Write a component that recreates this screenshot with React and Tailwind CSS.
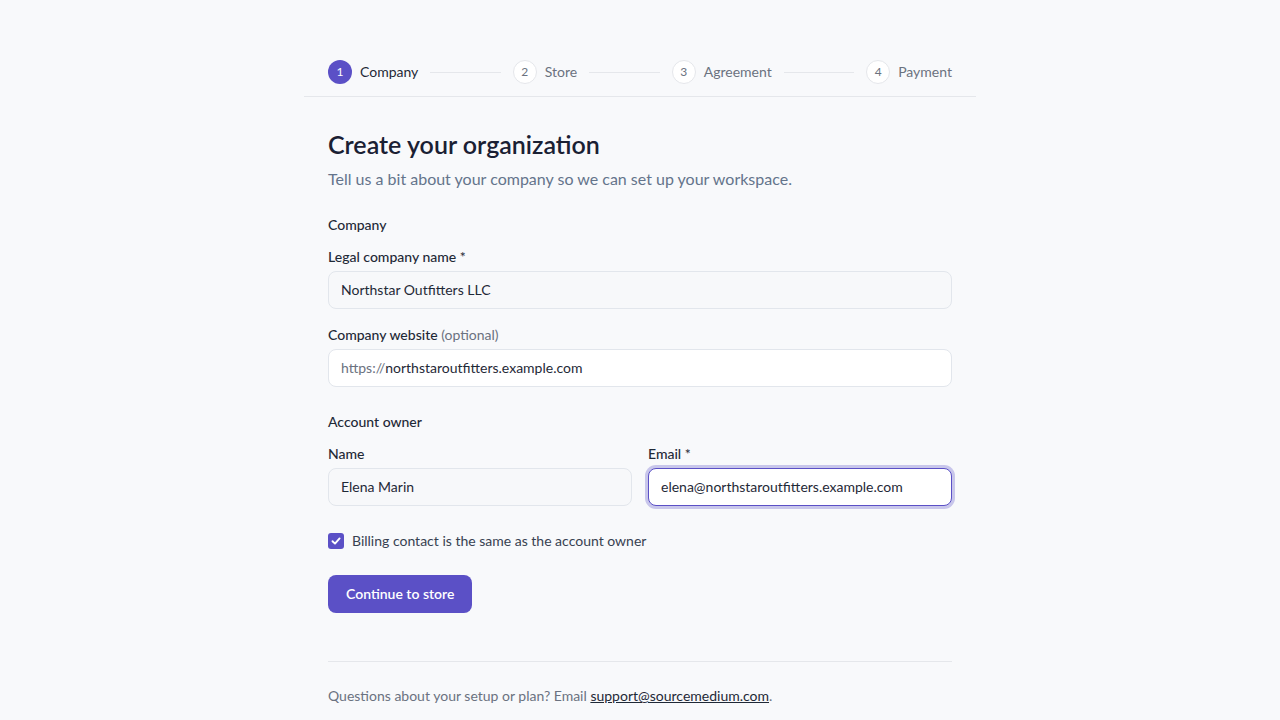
import React from "react";

const font = { fontFamily: "Lato, 'Noto Sans', sans-serif" };

function Step({ n, label, active }) {
  return (
    <div className="flex items-center gap-2 shrink-0">
      <div
        className={
          active
            ? "w-6 h-6 rounded-full bg-[#5b50c6] text-white text-xs flex items-center justify-center"
            : "w-6 h-6 rounded-full bg-white border border-[#e5e7eb] text-[#6b7280] text-xs flex items-center justify-center"
        }
      >
        {n}
      </div>
      <span className={active ? "text-sm text-[#1f2937]" : "text-sm text-[#6b7280]"}>{label}</span>
    </div>
  );
}

function Line() {
  return <div className="flex-1 h-px bg-[#e5e7eb] mx-3" />;
}

export default function App() {
  return (
    <div className="min-h-screen bg-[#f8f9fb]" style={font}>
      <div className="w-[672px] mx-auto">
        <div className="px-6 pt-[60px] pb-3 border-b border-[#e5e7eb] flex items-center">
          <Step n="1" label="Company" active />
          <Line />
          <Step n="2" label="Store" />
          <Line />
          <Step n="3" label="Agreement" />
          <Line />
          <Step n="4" label="Payment" />
        </div>
        <div className="px-6 pt-[31px]">
          <h1 className="text-[25px] leading-8 font-semibold text-[#1a2033]">Create your organization</h1>
          <p className="mt-[7px] text-base leading-6 text-[#64748b]">
            Tell us a bit about your company so we can set up your workspace.
          </p>

          <div className="mt-6 text-sm leading-5 font-medium text-[#1f2937]">Company</div>
          <div className="mt-3">
            <label className="block text-sm leading-5 font-medium text-[#1f2937]">Legal company name *</label>
            <div className="mt-1 h-[38px] rounded-lg border border-[#e2e6ec] bg-[#f7f8fa] px-3 flex items-center text-sm text-[#1f2937]">
              Northstar Outfitters LLC
            </div>
          </div>
          <div className="mt-4">
            <label className="block text-sm leading-5 font-medium text-[#1f2937]">
              Company website <span className="font-normal text-[#6b7280]">(optional)</span>
            </label>
            <div className="mt-1 h-[38px] rounded-lg border border-[#e2e6ec] bg-white px-3 flex items-center text-sm text-[#1f2937]">
              <span className="text-[#6b7280]">https://</span>northstaroutfitters.example.com
            </div>
          </div>

          <div className="mt-[25px] text-sm leading-5 font-medium text-[#1f2937]">Account owner</div>
          <div className="mt-3 grid grid-cols-2 gap-4">
            <div>
              <label className="block text-sm leading-5 font-medium text-[#1f2937]">Name</label>
              <div className="mt-1 h-[38px] rounded-lg border border-[#e2e6ec] bg-[#f7f8fa] px-3 flex items-center text-sm text-[#1f2937]">
                Elena Marin
              </div>
            </div>
            <div>
              <label className="block text-sm leading-5 font-medium text-[#1f2937]">Email *</label>
              <div className="mt-1 h-[38px] rounded-lg border border-[#5b50c6] ring-[3px] ring-[#5b50c6]/30 bg-white px-3 flex items-center text-sm text-[#1f2937]">
                elena@northstaroutfitters.example.com
              </div>
            </div>
          </div>

          <div className="mt-[25px] flex items-center gap-2 h-5">
            <div className="w-4 h-4 rounded-[3px] bg-[#5b50c6] flex items-center justify-center">
              <svg width="12" height="12" viewBox="0 0 12 12" fill="none">
                <path d="M2.5 6.2 L5 8.6 L9.6 3.4" stroke="white" strokeWidth="1.9" strokeLinecap="round" strokeLinejoin="round" />
              </svg>
            </div>
            <span className="text-sm text-[#374151]">Billing contact is the same as the account owner</span>
          </div>

          <button className="mt-6 h-[38px] px-[18px] rounded-lg bg-[#5b50c6] text-white text-sm font-semibold">
            Continue to store
          </button>

          <div className="mt-12 border-t border-[#e5e7eb] pt-6 text-sm leading-5 text-[#6b7280]">
            Questions about your setup or plan? Email{" "}
            <a className="underline text-[#1f2937]">support@sourcemedium.com</a>.
          </div>
        </div>
      </div>
    </div>
  );
}
